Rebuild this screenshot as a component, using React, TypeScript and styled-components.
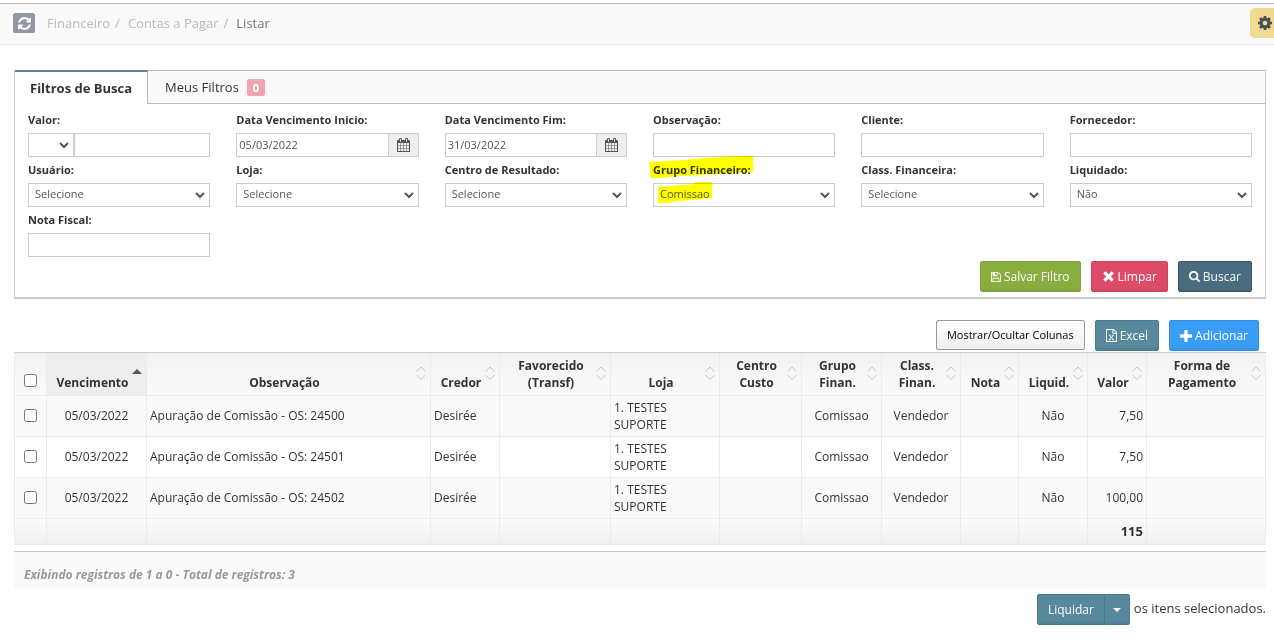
import React from 'react';
import styled, { createGlobalStyle, css } from 'styled-components';

const GlobalStyle = createGlobalStyle`
  *, *::before, *::after { box-sizing: border-box; }
  body {
    margin: 0;
    background: #fff;
    color: #333;
    font-family: "Open Sans", "Liberation Sans", sans-serif;
    font-size: 13px;
    line-height: 18px;
  }
  button, input, select { font-family: inherit; }
`;

/* ---------- icons ---------- */

const paths = {
  refresh:
    'M1639 1056q0 5-1 7-64 268-268 434.5t-478 166.5q-146 0-282.5-55t-243.5-157l-129 129q-19 19-45 19t-45-19-19-45v-448q0-26 19-45t45-19h448q26 0 45 19t19 45-19 45l-137 137q71 66 161 102t187 36q134 0 250-65t186-179q11-17 53-117 8-23 30-23h192q13 0 22.5 9.5t9.5 22.5zm25-800v448q0 26-19 45t-45 19h-448q-26 0-45-19t-19-45 19-45l138-138q-148-137-349-137-134 0-250 65t-186 179q-11 17-53 117-8 23-30 23h-199q-13 0-22.5-9.5t-9.5-22.5v-7q65-268 270-434.5t480-166.5q146 0 284 55.5t245 156.5l130-129q19-19 45-19t45 19 19 45z',
  calendar:
    'M192 1664h288v-288h-288v288zm352 0h320v-288h-320v288zm-352-352h288v-320h-288v320zm352 0h320v-320h-320v320zm-352-384h288v-288h-288v288zm736 736h320v-288h-320v288zm-384-736h320v-288h-320v288zm768 736h288v-288h-288v288zm-384-352h320v-320h-320v320zm-352-864v-288q0-13-9.5-22.5t-22.5-9.5h-64q-13 0-22.5 9.5t-9.5 22.5v288q0 13 9.5 22.5t22.5 9.5h64q13 0 22.5-9.5t9.5-22.5zm736 864h288v-320h-288v320zm-384-384h320v-288h-320v288zm384 0h288v-288h-288v288zm32-480v-288q0-13-9.5-22.5t-22.5-9.5h-64q-13 0-22.5 9.5t-9.5 22.5v288q0 13 9.5 22.5t22.5 9.5h64q13 0 22.5-9.5t9.5-22.5zm384-64v1280q0 52-38 90t-90 38h-1408q-52 0-90-38t-38-90v-1280q0-52 38-90t90-38h128v-96q0-66 47-113t113-47h64q66 0 113 47t47 113v96h384v-96q0-66 47-113t113-47h64q66 0 113 47t47 113v96h128q52 0 90 38t38 90z',
  cog: 'M1152 896q0-106-75-181t-181-75-181 75-75 181 75 181 181 75 181-75 75-181zm512-109v222q0 12-8 23t-20 13l-185 28q-19 54-39 91 35 50 107 138 10 12 10 25t-9 23q-27 37-99 108t-94 71q-12 0-26-9l-138-108q-44 23-91 38-16 136-29 186-7 28-36 28h-222q-14 0-24.5-8.5t-11.5-21.5l-28-184q-49-16-90-37l-141 107q-10 9-25 9-14 0-25-11-126-114-165-168-7-10-7-23 0-12 8-23 15-21 51-66.5t54-70.5q-27-50-41-99l-183-27q-13-2-21-12.5t-8-23.5v-222q0-12 8-23t19-13l186-28q14-46 39-92-40-57-107-138-10-12-10-24 0-10 9-23 26-36 98.5-107.5t94.5-71.5q13 0 26 10l138 107q44-23 91-38 16-136 29-186 7-28 36-28h222q14 0 24.5 8.5t11.5 21.5l28 184q49 16 90 37l142-107q9-9 24-9 13 0 25 10 129 119 165 170 7 8 7 22 0 12-8 23-15 21-51 66.5t-54 70.5q26 50 41 98l183 28q13 2 21 12.5t8 23.5z',
  save: 'M512 1536h768v-384h-768v384zm896 0h128v-896q0-14-10-38.5t-20-34.5l-281-281q-10-10-34-20t-39-10v416q0 40-28 68t-68 28h-576q-40 0-68-28t-28-68v-416h-128v1280h128v-416q0-40 28-68t68-28h832q40 0 68 28t28 68v416zm-384-928v-320q0-13-9.5-22.5t-22.5-9.5h-192q-13 0-22.5 9.5t-9.5 22.5v320q0 13 9.5 22.5t22.5 9.5h192q13 0 22.5-9.5t9.5-22.5zm640 32v928q0 40-28 68t-68 28h-1344q-40 0-68-28t-28-68v-1344q0-40 28-68t68-28h928q40 0 88 20t76 48l280 280q28 28 48 76t20 88z',
  times:
    'M1490 1322q0 40-28 68l-136 136q-28 28-68 28t-68-28l-294-294-294 294q-28 28-68 28t-68-28l-136-136q-28-28-28-68t28-68l294-294-294-294q-28-28-28-68t28-68l136-136q28-28 68-28t68 28l294 294 294-294q28-28 68-28t68 28l136 136q28 28 28 68t-28 68l-294 294 294 294q28 28 28 68z',
  search:
    'M1216 832q0-185-131.5-316.5t-316.5-131.5-316.5 131.5-131.5 316.5 131.5 316.5 316.5 131.5 316.5-131.5 131.5-316.5zm512 832q0 52-38 90t-90 38q-54 0-90-38l-343-342q-179 124-399 124-143 0-273.5-55.5t-225-150-150-225-55.5-273.5 55.5-273.5 150-225 225-150 273.5-55.5 273.5 55.5 225 150 150 225 55.5 273.5q0 220-124 399l343 343q37 37 37 90z',
  plus: 'M1600 736v192q0 40-28 68t-68 28h-416v416q0 40-28 68t-68 28h-192q-40 0-68-28t-28-68v-416h-416q-40 0-68-28t-28-68v-192q0-40 28-68t68-28h416v-416q0-40 28-68t68-28h192q40 0 68 28t28 68v416h416q40 0 68 28t28 68z',
  excel:
    'M1596 380q28 28 48 76t20 88v1152q0 40-28 68t-68 28h-1344q-40 0-68-28t-28-68v-1600q0-40 28-68t68-28h896q40 0 88 20t76 48zm-444-244v376h376q-10-29-22-41l-313-313q-12-12-41-22zm384 1528v-1024h-416q-40 0-68-28t-28-68v-416h-768v1536h1280zM530 800h260v105h-60l165 215 165-215h-60v-105h260v105h-75l-215 270 225 285h75v105h-270v-105h65l-175-225-175 225h65v105h-270v-105h75l225-285-215-270h-65z',
};

const boxes: Record<keyof typeof paths, string> = {
  refresh: '128 128 1536 1536',
  calendar: '64 0 1664 1792',
  cog: '128 128 1536 1536',
  save: '128 128 1536 1536',
  times: '124 328 1544 1400',
  search: '64 128 1664 1664',
  plus: '192 128 1408 1408',
  excel: '128 0 1536 1792',
};

const Svg = styled.svg`
  display: block;
  flex: none;
  fill: currentColor;
`;

const Icon = ({ name, w, h = w }: { name: keyof typeof paths; w: number; h?: number }) => (
  <Svg width={w} height={h} viewBox={boxes[name]} aria-hidden="true">
    <path d={paths[name]} />
  </Svg>
);

/* ---------- top bar ---------- */

const TopBar = styled.header`
  display: flex;
  align-items: center;
  justify-content: space-between;
  height: 42px;
  margin-top: 3px;
  padding: 0 0 2px 13px;
  background: #f9f9f9;
  border-top: 1px solid #b8b8b8;
  border-bottom: 1px solid #ebebeb;
`;

const Trail = styled.nav`
  display: flex;
  align-items: center;
  gap: 12px;
`;

const RefreshButton = styled.button`
  display: flex;
  align-items: center;
  justify-content: center;
  width: 22px;
  height: 20px;
  padding: 0;
  border: 0;
  border-radius: 2px;
  background: #9297a0;
  color: #fff;
`;

const Crumbs = styled.ol`
  display: flex;
  margin: 0;
  padding: 0;
  list-style: none;
  color: #777;
`;

const Crumb = styled.li`
  & + &::before {
    content: "/";
    padding: 0 8px 0 5px;
    color: #bbb;
  }
  a {
    color: #bbb;
    text-decoration: none;
  }
`;

const SettingsButton = styled.button`
  display: flex;
  align-items: center;
  width: 24px;
  height: 30px;
  padding: 0 0 0 8px;
  border: 0;
  border-radius: 5px 0 0 5px;
  background: #f1da91;
  color: #4a4f55;
  overflow: hidden;
`;

/* ---------- filter panel ---------- */

const Content = styled.main`
  padding: 25px 8px 0 14px;
`;

const Panel = styled.section`
  border: 1px solid #ccc;
  border-top-color: #bbb;
  border-bottom: 2px solid #ccc;
`;

const Tabs = styled.div`
  display: flex;
  height: 33px;
  background: #fafafa;
  border-bottom: 1px solid #bbb;
`;

const Tab = styled.button<{ $active?: boolean }>`
  display: flex;
  align-items: center;
  gap: 8px;
  padding: 0 17px;
  border: 0;
  background: none;
  color: #333;
  font-size: 13px;
  line-height: 18px;
  ${(p) =>
    p.$active &&
    css`
      height: 34px;
      margin-top: -1px;
      padding: 0 15px;
      border-top: 2px solid #57889c;
      border-right: 1px solid #bbb;
      background: #fff;
      font-weight: 700;
    `}
`;

const Badge = styled.span`
  padding: 0 6px;
  border-radius: 2px;
  background: #eda5b3;
  color: #fff;
  font-size: 11px;
  font-weight: 700;
  line-height: 17px;
`;

const Fields = styled.form`
  display: grid;
  grid-template-columns: repeat(6, 1fr);
  padding-top: 7px;
`;

const Field = styled.div`
  display: flex;
  flex-direction: column;
  gap: 4px;
  min-width: 0;
  height: 50px;
  padding: 0 13px;
`;

const Label = styled.label`
  align-self: flex-start;
  position: relative;
  font-size: 11px;
  font-weight: 700;
  line-height: 18px;
`;

const Group = styled.div`
  display: flex;
  position: relative;
`;

const control = css`
  height: 24px;
  min-width: 0;
  margin: 0;
  border: 1px solid #ccc;
  border-radius: 0;
  background: #fff;
  color: #555;
  font-size: 11px;
  line-height: 16px;
`;

const TextInput = styled.input`
  ${control}
  flex: 1;
  width: 100%;
  padding: 0 2px 2px;
`;

const SelectBox = styled.div<{ $narrow?: boolean }>`
  display: flex;
  position: relative;
  flex: ${(p) => (p.$narrow ? '0 0 46px' : '1')};
  min-width: 0;
`;

const Select = styled.select`
  ${control}
  width: 100%;
  padding: 0 20px 2px 6px;
  appearance: none;
`;

const Chevron = styled.svg`
  position: absolute;
  top: 9px;
  right: 5px;
  fill: none;
  stroke: #555;
  stroke-width: 2;
  pointer-events: none;
`;

const DateButton = styled.button`
  display: flex;
  align-items: center;
  justify-content: center;
  width: 31px;
  height: 24px;
  margin-left: -1px;
  padding: 0;
  border: 1px solid #ccc;
  background: #eee;
  color: #555;
`;

const Marker = styled.svg`
  position: absolute;
  left: -4px;
  fill: #ff0;
  mix-blend-mode: multiply;
  pointer-events: none;
`;

const LabelMarker = styled(Marker)`
  top: -5px;
`;

const ValueMarker = styled(Marker)`
  top: -1px;
  left: 4px;
`;

/* ---------- buttons ---------- */

const Actions = styled.div`
  display: flex;
  justify-content: flex-end;
  gap: 10px;
  padding: 0 13px 5px;
`;

const Toolbar = styled.div`
  display: flex;
  justify-content: flex-end;
  gap: 10px;
  padding: 21px 7px 1px;
`;

const tones = {
  green: ['#8aad41', '#7fa03a'],
  red: ['#de4b68', '#cc4460'],
  dark: ['#496d7e', '#3a5866'],
  teal: ['#57889c', '#4c7a8d'],
  blue: ['#3a9df5', '#3190e6'],
};

const Button = styled.button<{ $tone: keyof typeof tones }>`
  display: flex;
  align-items: center;
  gap: 3px;
  height: 31px;
  padding: 0 10px;
  border: 1px solid ${(p) => tones[p.$tone][1]};
  border-radius: 2px;
  background: ${(p) => tones[p.$tone][0]};
  box-shadow: inset 0 -2px 0 rgba(0, 0, 0, 0.05);
  color: #fff;
  font-size: 12px;
  line-height: 18px;
  white-space: nowrap;
`;

const ColumnsButton = styled.button`
  height: 30px;
  padding: 0 10px;
  border: 1px solid #999;
  border-radius: 2px;
  background: linear-gradient(#fff, #f0f0f0);
  color: #000;
  font-size: 11px;
  line-height: 18px;
`;

/* ---------- table ---------- */

const Table = styled.table`
  width: 100%;
  table-layout: fixed;
  border-collapse: separate;
  border-spacing: 0;
  border-top: 1px solid #ccc;
  border-left: 1px solid #ebebeb;
  font-size: 12px;
  line-height: 17px;
`;

const HeadRow = styled.tr`
  background: linear-gradient(#f2f2f2, #fafafa);
`;

const HeadCell = styled.th<{ $sorted?: boolean; $check?: boolean }>`
  height: 43px;
  padding: ${(p) => (p.$check ? '12px 0 0' : '2px 4px 4px 9px')};
  border-right: 1px solid #ebebeb;
  border-bottom: 1px solid #ebebeb;
  background: ${(p) => (p.$sorted ? '#eee' : 'none')};
  font-weight: 700;
  text-align: center;
`;

const HeadContent = styled.div`
  display: flex;
  align-items: center;
  justify-content: space-between;
  gap: 3px;
  min-height: 36px;
`;

const HeadLabel = styled.span`
  flex: 1;
  align-self: flex-end;
  white-space: pre;
`;

const BodyRow = styled.tr`
  background: #fff;
  &:nth-child(odd) {
    background: #f9f9f9;
  }
`;

const FootRow = styled.tr`
  background: linear-gradient(#fafafa, #f0f0f0);
  font-size: 13px;
  font-weight: 700;
`;

const Cell = styled.td<{ $align?: string; $foot?: boolean }>`
  height: ${(p) => (p.$foot ? 26 : 41)}px;
  padding: 2px 3px 3px;
  border-right: 1px solid #ebebeb;
  border-bottom: 1px solid #ebebeb;
  text-align: ${(p) => p.$align || 'left'};
  vertical-align: middle;
`;

const Check = styled.input`
  display: block;
  width: 13px;
  height: 13px;
  margin: 0 auto;
`;

const Store = styled.div`
  max-width: 80px;
`;

/* ---------- footer ---------- */

const Info = styled.div`
  margin-top: 6px;
  padding: 14px 10px 4px;
  border-top: 1px solid #c4c8c6;
  background: #fafafa;
  color: #999;
  font-size: 12px;
  font-style: italic;
  font-weight: 700;
`;

const BulkBar = styled.div`
  display: flex;
  justify-content: flex-end;
  gap: 4px;
  padding-top: 6px;
  line-height: 28px;
`;

const Split = styled.div`
  display: flex;
  button:first-child {
    border-radius: 2px 0 0 2px;
  }
  button:last-child {
    margin-left: -1px;
    padding: 0 8px;
    border-radius: 0 2px 2px 0;
  }
`;

/* ---------- data ---------- */

const columns: { title: string; width: number; align?: string }[] = [
  { title: 'Vencimento', width: 100, align: 'center' },
  { title: 'Observação', width: 284 },
  { title: 'Credor', width: 69 },
  { title: 'Favorecido\n(Transf)', width: 111 },
  { title: 'Loja', width: 109 },
  { title: 'Centro\nCusto', width: 82 },
  { title: 'Grupo\nFinan.', width: 80, align: 'center' },
  { title: 'Class.\nFinan.', width: 79, align: 'center' },
  { title: 'Nota', width: 58 },
  { title: 'Liquid.', width: 69, align: 'center' },
  { title: 'Valor', width: 59, align: 'right' },
  { title: 'Forma de\nPagamento', width: 119 },
];

const rows = [
  { os: '24500', value: '7,50' },
  { os: '24501', value: '7,50' },
  { os: '24502', value: '100,00' },
].map((r) => [
  '05/03/2022',
  `Apuração de Comissão - OS: ${r.os}`,
  'Desirée',
  '',
  '1. TESTES SUPORTE',
  '',
  'Comissao',
  'Vendedor',
  '',
  'Não',
  r.value,
  '',
]);

const SortIcon = ({ sorted }: { sorted: boolean }) =>
  sorted ? (
    <Svg width="10" height="14" viewBox="0 0 10 14" aria-hidden="true">
      <path d="M0 8 5 3l5 5z" fill="#555" />
    </Svg>
  ) : (
    <Svg width="10" height="14" viewBox="0 0 10 14" aria-hidden="true">
      <path d="M.5 5.5 5 1l4.5 4.500M.5 9 5 13.5 9.5 9" fill="none" stroke="#c4c4c4" />
    </Svg>
  );

const SelectArrow = () => (
  <Chevron width="10" height="7" viewBox="0 0 10 7" aria-hidden="true">
    <path d="M1 1l4 4 4-4" />
  </Chevron>
);

const SelectField = ({ id, label, value, marked }: { id: string; label: string; value: string; marked?: boolean }) => (
  <Field>
    <Label htmlFor={id}>
      {label}
      {marked && (
        <LabelMarker width="105" height="22" viewBox="0 0 105 22">
          <path d="M0 6 35 4 56 2 92 0h12v16l-33 2-40 2-19 2H2z" />
        </LabelMarker>
      )}
    </Label>
    <SelectBox>
      <Select id={id} defaultValue={value}>
        <option>{value}</option>
      </Select>
      <SelectArrow />
      {marked && (
        <ValueMarker width="56" height="22" viewBox="0 0 56 22">
          <path d="M1 5 38 2V0h17v16l-22 2-12 1-11 2H1z" />
        </ValueMarker>
      )}
    </SelectBox>
  </Field>
);

const TextField = ({ id, label }: { id: string; label: string }) => (
  <Field>
    <Label htmlFor={id}>{label}</Label>
    <Group>
      <TextInput id={id} type="text" />
    </Group>
  </Field>
);

const DateField = ({ id, label, value }: { id: string; label: string; value: string }) => (
  <Field>
    <Label htmlFor={id}>{label}</Label>
    <Group>
      <TextInput id={id} type="text" defaultValue={value} />
      <DateButton type="button" aria-label="Abrir calendário">
        <Icon name="calendar" w={13} h={14} />
      </DateButton>
    </Group>
  </Field>
);

export default function App() {
  return (
    <>
      <GlobalStyle />
      <TopBar>
        <Trail>
          <RefreshButton type="button" aria-label="Atualizar">
            <Icon name="refresh" w={13} />
          </RefreshButton>
          <Crumbs>
            <Crumb><a href="#financeiro">Financeiro</a></Crumb>
            <Crumb><a href="#contas">Contas a Pagar</a></Crumb>
            <Crumb>Listar</Crumb>
          </Crumbs>
        </Trail>
        <SettingsButton type="button" aria-label="Configurações">
          <Icon name="cog" w={14} />
        </SettingsButton>
      </TopBar>

      <Content>
        <Panel>
          <Tabs>
            <Tab type="button" $active>Filtros de Busca</Tab>
            <Tab type="button">Meus Filtros <Badge>0</Badge></Tab>
          </Tabs>
          <Fields>
            <Field>
              <Label htmlFor="valor">Valor:</Label>
              <Group>
                <SelectBox $narrow>
                  <Select aria-label="Operador"><option></option></Select>
                  <SelectArrow />
                </SelectBox>
                <TextInput id="valor" type="text" />
              </Group>
            </Field>
            <DateField id="inicio" label="Data Vencimento Inicio:" value="05/03/2022" />
            <DateField id="fim" label="Data Vencimento Fim:" value="31/03/2022" />
            <TextField id="obs" label="Observação:" />
            <TextField id="cliente" label="Cliente:" />
            <TextField id="fornecedor" label="Fornecedor:" />
            <SelectField id="usuario" label="Usuário:" value="Selecione" />
            <SelectField id="loja" label="Loja:" value="Selecione" />
            <SelectField id="centro" label="Centro de Resultado:" value="Selecione" />
            <SelectField id="grupo" label="Grupo Financeiro:" value="Comissao" marked />
            <SelectField id="classe" label="Class. Financeira:" value="Selecione" />
            <SelectField id="liquidado" label="Liquidado:" value="Não" />
            <TextField id="nota" label="Nota Fiscal:" />
          </Fields>
          <Actions>
            <Button type="button" $tone="green"><Icon name="save" w={10} />Salvar Filtro</Button>
            <Button type="button" $tone="red"><Icon name="times" w={13} h={12} />Limpar</Button>
            <Button type="button" $tone="dark"><Icon name="search" w={11} />Buscar</Button>
          </Actions>
        </Panel>

        <Toolbar>
          <ColumnsButton type="button">Mostrar/Ocultar Colunas</ColumnsButton>
          <Button type="button" $tone="teal"><Icon name="excel" w={11} h={13} />Excel</Button>
          <Button type="button" $tone="blue"><Icon name="plus" w={12} />Adicionar</Button>
        </Toolbar>

        <Table>
          <colgroup>
            <col width={32} />
            {columns.map((c) => <col key={c.title} width={c.width} />)}
          </colgroup>
          <thead>
            <HeadRow>
              <HeadCell $check><Check type="checkbox" aria-label="Selecionar todos" /></HeadCell>
              {columns.map((c, i) => (
                <HeadCell key={c.title} $sorted={i === 0}>
                  <HeadContent>
                    <HeadLabel>{c.title}</HeadLabel>
                    <SortIcon sorted={i === 0} />
                  </HeadContent>
                </HeadCell>
              ))}
            </HeadRow>
          </thead>
          <tbody>
            {rows.map((row) => (
              <BodyRow key={row[1]}>
                <Cell><Check type="checkbox" aria-label={row[1]} /></Cell>
                {row.map((value, i) => (
                  <Cell key={i} $align={columns[i].align}>
                    {columns[i].title === 'Loja' ? <Store>{value}</Store> : value}
                  </Cell>
                ))}
              </BodyRow>
            ))}
          </tbody>
          <tfoot>
            <FootRow>
              <Cell $foot />
              {columns.map((c) => (
                <Cell key={c.title} $foot $align={c.align}>{c.title === 'Valor' ? '115' : ''}</Cell>
              ))}
            </FootRow>
          </tfoot>
        </Table>

        <Info>Exibindo registros de 1 a 0 - Total de registros: 3</Info>

        <BulkBar>
          <Split>
            <Button type="button" $tone="teal">Liquidar</Button>
            <Button type="button" $tone="teal" aria-label="Mais opções">
              <Svg width="8" height="4" viewBox="0 0 8 4" aria-hidden="true"><path d="M0 0h8L4 4z" /></Svg>
            </Button>
          </Split>
          <span>os itens selecionados.</span>
        </BulkBar>
      </Content>
    </>
  );
}
